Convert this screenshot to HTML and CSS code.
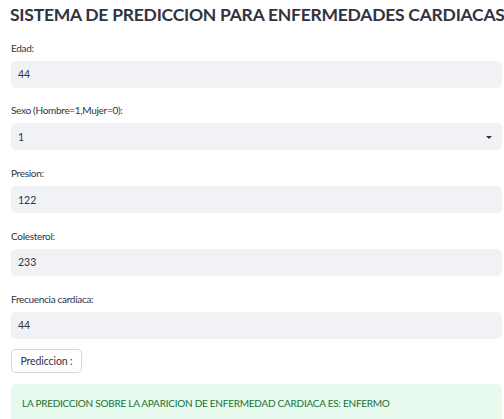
FILE: index.html
```html
<!DOCTYPE html>
<html lang="es">
<head>
<meta charset="utf-8">
<title>Sistema de prediccion</title>
<link rel="stylesheet" href="styles.css">
</head>
<body>
<main class="page">
  <h1 class="title">SISTEMA DE PREDICCION PARA ENFERMEDADES CARDIACAS</h1>
  <div class="form">
    <div class="field">
      <label class="label">Edad:</label>
      <div class="input"><span>44</span></div>
    </div>
    <div class="field">
      <label class="label">Sexo (Hombre=1,Mujer=0):</label>
      <div class="input select"><span>1</span><span class="caret"></span></div>
    </div>
    <div class="field">
      <label class="label">Presion:</label>
      <div class="input"><span>122</span></div>
    </div>
    <div class="field">
      <label class="label">Colesterol:</label>
      <div class="input"><span>233</span></div>
    </div>
    <div class="field">
      <label class="label">Frecuencia cardiaca:</label>
      <div class="input"><span>44</span></div>
    </div>
  </div>
  <button class="button">Prediccion :</button>
  <div class="success">LA PREDICCION SOBRE LA APARICION DE ENFERMEDAD CARDIACA ES: ENFERMO</div>
</main>
</body>
</html>
```

FILE: styles.css
```css
html, body {
  margin: 0;
  padding: 0;
  background: #ffffff;
}

body {
  font-family: Lato, "Liberation Sans", sans-serif;
  color: #31333f;
}

.page {
  padding: 4px 2px 0 11px;
  display: flex;
  flex-direction: column;
  align-items: stretch;
}

.title {
  margin: 0 0 0 -1px;
  font-size: 17.5px;
  line-height: 22px;
  font-weight: 700;
  letter-spacing: -0.25px;
  color: #31333f;
  white-space: nowrap;
}

.form {
  margin-top: 14.5px;
  display: flex;
  flex-direction: column;
  gap: 15.75px;
}

.field {
  display: flex;
  flex-direction: column;
}

.label {
  font-size: 10px;
  line-height: 14px;
  letter-spacing: -0.3px;
  margin-bottom: 6px;
  color: #31333f;
}

.input {
  height: 27px;
  background: #f0f2f6;
  border-radius: 5px;
  display: flex;
  align-items: center;
  justify-content: space-between;
  padding: 0 10px 0 7px;
  font-size: 10.5px;
  color: #31333f;
}

.caret {
  width: 0;
  height: 0;
  border-left: 3px solid transparent;
  border-right: 3px solid transparent;
  border-top: 3px solid #31333f;
  margin-top: 1px;
}

.button {
  align-self: flex-start;
  margin-top: 10.5px;
  height: 24px;
  padding: 0 8.5px;
  background: #ffffff;
  border: 1px solid rgba(49, 51, 63, 0.2);
  border-radius: 5px;
  font-family: Lato, "Liberation Sans", sans-serif;
  font-size: 10.5px;
  letter-spacing: -0.1px;
  color: #31333f;
}

.success {
  margin-top: 11px;
  background: #e8f9ee;
  color: #177233;
  border-radius: 5px;
  padding: 12px 11px;
  font-size: 10px;
  line-height: 14px;
  letter-spacing: -0.25px;
  height: 20px;
}
```
